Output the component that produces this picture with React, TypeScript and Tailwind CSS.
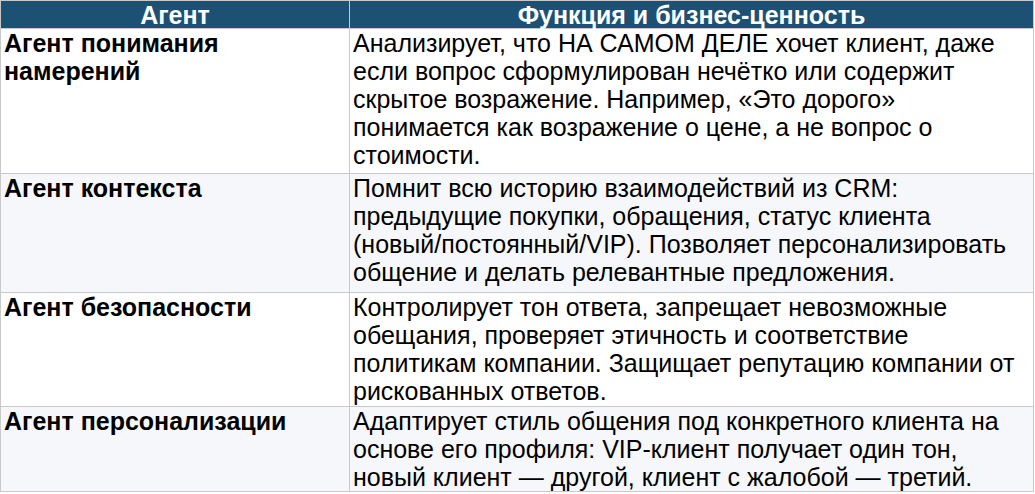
import React from "react";

const rows = [
  {
    agent: "Агент понимания намерений",
    text: "Анализирует, что НА САМОМ ДЕЛЕ хочет клиент, даже если вопрос сформулирован нечётко или содержит скрытое возражение. Например, «Это дорого» понимается как возражение о цене, а не вопрос о стоимости.",
    h: "h-[145px]",
  },
  {
    agent: "Агент контекста",
    text: "Помнит всю историю взаимодействий из CRM: предыдущие покупки, обращения, статус клиента (новый/\u2060постоянный/\u2060VIP). Позволяет персонализировать общение и делать релевантные предложения.",
    h: "h-[119px]",
  },
  {
    agent: "Агент безопасности",
    text: "Контролирует тон ответа, запрещает невозможные обещания, проверяет этичность и соответствие политикам компании. Защищает репутацию компании от рискованных ответов.",
    h: "h-[114px]",
  },
  {
    agent: "Агент персонализации",
    text: "Адаптирует стиль общения под конкретного клиента на основе его профиля: VIP-клиент получает один тон, новый клиент — другой, клиент с жалобой — третий.",
    h: "h-[84px]",
  },
];

export default function App() {
  return (
    <div className="w-[1035px] h-[494px] bg-white font-['Liberation_Sans',Arial,sans-serif] text-[25px] leading-[28.5px] text-black">
      <table className="w-[1034px] border-collapse table-fixed">
        <colgroup>
          <col className="w-[349px]" />
          <col />
        </colgroup>
        <thead>
          <tr className="bg-[#1c5174] text-white h-[28px]">
            <th className="border border-[#c9c9c9] font-bold text-center px-1 py-0 leading-[26px]">Агент</th>
            <th className="border border-[#c9c9c9] font-bold text-center px-1 py-0 leading-[26px]">Функция и бизнес-ценность</th>
          </tr>
        </thead>
        <tbody>
          {rows.map((row, i) => (
            <tr key={i} className={`${row.h} leading-[28px] ${i % 2 === 1 ? "bg-[#f5f7fa]" : "bg-white"}`}>
              <td className="border border-[#c9c9c9] align-top font-bold pl-[3px] pr-[3px] py-0">{row.agent}</td>
              <td className="border border-[#c9c9c9] align-top pl-[3px] pr-[3px] py-0">{row.text}</td>
            </tr>
          ))}
        </tbody>
      </table>
    </div>
  );
}
